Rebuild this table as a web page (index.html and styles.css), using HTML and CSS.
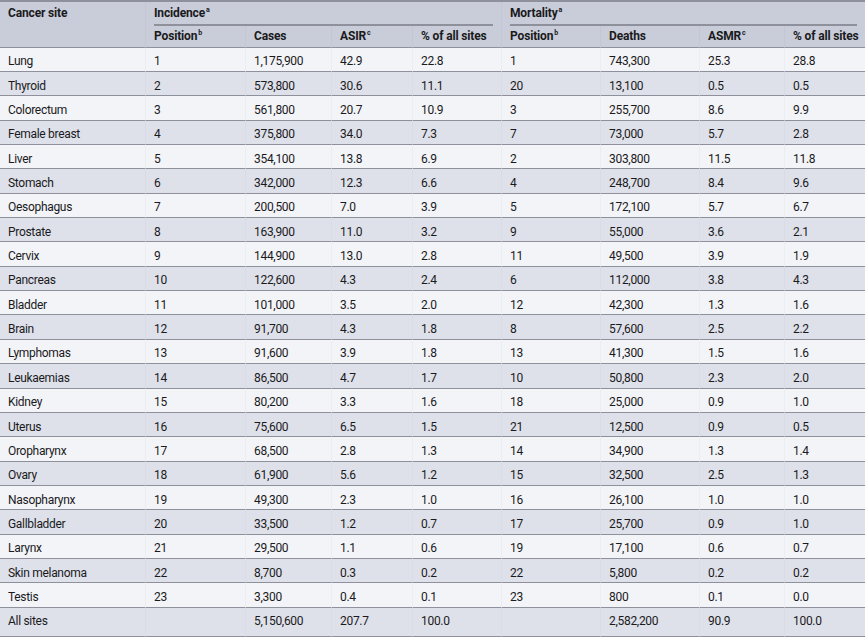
FILE: index.html
```html
<!DOCTYPE html>
<html>
<head>
<meta charset="utf-8">
<link rel="stylesheet" href="styles.css">
</head>
<body>
<table class="stats">
<colgroup>
<col class="c-site"><col class="c-pos"><col class="c-cases"><col class="c-rate"><col class="c-pct"><col class="c-pos2"><col class="c-deaths"><col class="c-rate2"><col class="c-pct2">
</colgroup>
<thead>
<tr class="h1">
<th rowspan="2" class="site-h">Cancer site</th>
<th colspan="4" class="group"><span class="group-label">Incidence<sup>a</sup></span></th>
<th colspan="4" class="group"><span class="group-label">Mortality<sup>a</sup></span></th>
</tr>
<tr class="h2">
<th>Position<sup>b</sup></th><th>Cases</th><th>ASIR<sup>c</sup></th><th>% of all sites</th>
<th>Position<sup>b</sup></th><th>Deaths</th><th>ASMR<sup>c</sup></th><th>% of all sites</th>
</tr>
</thead>
<tbody>
<tr><td>Lung</td><td>1</td><td>1,175,900</td><td>42.9</td><td>22.8</td><td>1</td><td>743,300</td><td>25.3</td><td>28.8</td></tr>
<tr><td>Thyroid</td><td>2</td><td>573,800</td><td>30.6</td><td>11.1</td><td>20</td><td>13,100</td><td>0.5</td><td>0.5</td></tr>
<tr><td>Colorectum</td><td>3</td><td>561,800</td><td>20.7</td><td>10.9</td><td>3</td><td>255,700</td><td>8.6</td><td>9.9</td></tr>
<tr><td>Female breast</td><td>4</td><td>375,800</td><td>34.0</td><td>7.3</td><td>7</td><td>73,000</td><td>5.7</td><td>2.8</td></tr>
<tr><td>Liver</td><td>5</td><td>354,100</td><td>13.8</td><td>6.9</td><td>2</td><td>303,800</td><td>11.5</td><td>11.8</td></tr>
<tr><td>Stomach</td><td>6</td><td>342,000</td><td>12.3</td><td>6.6</td><td>4</td><td>248,700</td><td>8.4</td><td>9.6</td></tr>
<tr><td>Oesophagus</td><td>7</td><td>200,500</td><td>7.0</td><td>3.9</td><td>5</td><td>172,100</td><td>5.7</td><td>6.7</td></tr>
<tr><td>Prostate</td><td>8</td><td>163,900</td><td>11.0</td><td>3.2</td><td>9</td><td>55,000</td><td>3.6</td><td>2.1</td></tr>
<tr><td>Cervix</td><td>9</td><td>144,900</td><td>13.0</td><td>2.8</td><td>11</td><td>49,500</td><td>3.9</td><td>1.9</td></tr>
<tr><td>Pancreas</td><td>10</td><td>122,600</td><td>4.3</td><td>2.4</td><td>6</td><td>112,000</td><td>3.8</td><td>4.3</td></tr>
<tr><td>Bladder</td><td>11</td><td>101,000</td><td>3.5</td><td>2.0</td><td>12</td><td>42,300</td><td>1.3</td><td>1.6</td></tr>
<tr><td>Brain</td><td>12</td><td>91,700</td><td>4.3</td><td>1.8</td><td>8</td><td>57,600</td><td>2.5</td><td>2.2</td></tr>
<tr><td>Lymphomas</td><td>13</td><td>91,600</td><td>3.9</td><td>1.8</td><td>13</td><td>41,300</td><td>1.5</td><td>1.6</td></tr>
<tr><td>Leukaemias</td><td>14</td><td>86,500</td><td>4.7</td><td>1.7</td><td>10</td><td>50,800</td><td>2.3</td><td>2.0</td></tr>
<tr><td>Kidney</td><td>15</td><td>80,200</td><td>3.3</td><td>1.6</td><td>18</td><td>25,000</td><td>0.9</td><td>1.0</td></tr>
<tr><td>Uterus</td><td>16</td><td>75,600</td><td>6.5</td><td>1.5</td><td>21</td><td>12,500</td><td>0.9</td><td>0.5</td></tr>
<tr><td>Oropharynx</td><td>17</td><td>68,500</td><td>2.8</td><td>1.3</td><td>14</td><td>34,900</td><td>1.3</td><td>1.4</td></tr>
<tr><td>Ovary</td><td>18</td><td>61,900</td><td>5.6</td><td>1.2</td><td>15</td><td>32,500</td><td>2.5</td><td>1.3</td></tr>
<tr><td>Nasopharynx</td><td>19</td><td>49,300</td><td>2.3</td><td>1.0</td><td>16</td><td>26,100</td><td>1.0</td><td>1.0</td></tr>
<tr><td>Gallbladder</td><td>20</td><td>33,500</td><td>1.2</td><td>0.7</td><td>17</td><td>25,700</td><td>0.9</td><td>1.0</td></tr>
<tr><td>Larynx</td><td>21</td><td>29,500</td><td>1.1</td><td>0.6</td><td>19</td><td>17,100</td><td>0.6</td><td>0.7</td></tr>
<tr><td>Skin melanoma</td><td>22</td><td>8,700</td><td>0.3</td><td>0.2</td><td>22</td><td>5,800</td><td>0.2</td><td>0.2</td></tr>
<tr><td>Testis</td><td>23</td><td>3,300</td><td>0.4</td><td>0.1</td><td>23</td><td>800</td><td>0.1</td><td>0.0</td></tr>
<tr class="total"><td>All sites</td><td></td><td>5,150,600</td><td>207.7</td><td>100.0</td><td></td><td>2,582,200</td><td>90.9</td><td>100.0</td></tr>
</tbody>
</table>
</body>
</html>
```

FILE: styles.css
```css
html, body {
  margin: 0;
  padding: 0;
  background: #ffffff;
}

.stats {
  width: 865px;
  table-layout: fixed;
  border-collapse: separate;
  border-spacing: 0;
  font-family: Roboto, "Liberation Sans", Arial, sans-serif;
  font-size: 12px;
  color: #1a1a1c;
  border-top: 2px solid #8e919b;
}

.c-site { width: 145px; }
.c-pos { width: 100px; }
.c-cases { width: 86px; }
.c-rate { width: 81px; }
.c-pct { width: 89px; }
.c-pos2 { width: 99px; }
.c-deaths { width: 99px; }
.c-rate2 { width: 85px; }
.c-pct2 { width: 81px; }

.stats th {
  box-sizing: border-box;
  background: #c9cdd9;
  font-weight: 700;
  text-align: left;
  padding: 0 8px;
  white-space: nowrap;
  letter-spacing: -0.15px;
  line-height: 14px;
  border-left: 1px solid rgba(110, 116, 135, 0.06);
}

.stats .site-h {
  border-left: none;
  vertical-align: top;
  padding-top: 4px;
  border-bottom: 1px solid #8e919b;
}

.stats .h1 th.group {
  height: 23.5px;
  vertical-align: bottom;
  padding-bottom: 0;
}

.group-label {
  display: block;
  border-bottom: 2px solid #8e919b;
  padding-bottom: 3.5px;
  line-height: 14px;
}

.stats .h2 th {
  height: 22px;
  vertical-align: middle;
  border-bottom: 1px solid #8e919b;
}

.stats sup {
  font-size: 7px;
  line-height: 0;
  vertical-align: 5px;
  margin-left: 1px;
}

.stats td {
  box-sizing: border-box;
  height: 24.36px;
  padding: 4px 8px 0;
  border-bottom: 1px solid #8e919b;
  border-left: 1px solid rgba(110, 116, 135, 0.05);
  white-space: nowrap;
  line-height: 14px;
  letter-spacing: -0.3px;
  vertical-align: middle;
}

.stats td:first-child {
  border-left: none;
}

.stats tbody tr:nth-child(odd) td {
  background: #f3f4f8;
}

.stats tbody tr:nth-child(even) td {
  background: #dfe1ea;
}

.stats .total td {
  height: 29px;
  vertical-align: top;
  padding-top: 6px;
}
```
